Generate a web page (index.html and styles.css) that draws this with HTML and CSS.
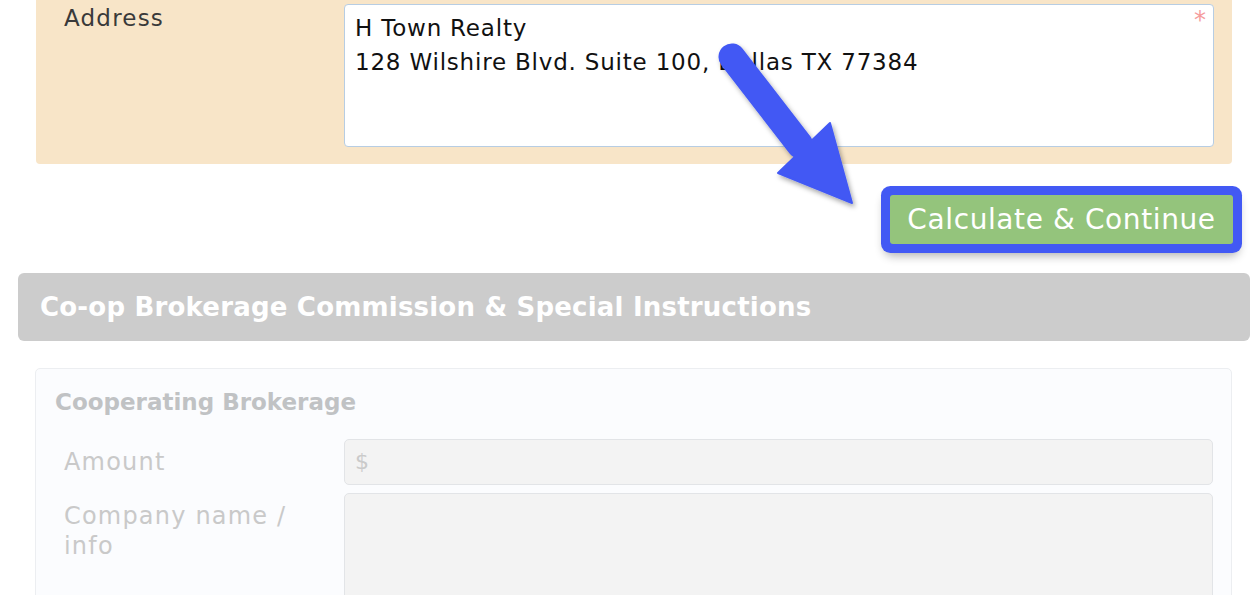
FILE: index.html
```html
<!DOCTYPE html>
<html lang="en">
<head>
  <meta charset="UTF-8" />
  <title>Listing details</title>
  <link rel="stylesheet" href="styles.css">
</head>
<body>
  <div class="page">
    <div class="panel panel-warm">
      <div class="row">
        <label class="label">Address</label>
        <div class="field">
          <div class="textarea">H Town Realty<br>128 Wilshire Blvd. Suite 100, Dallas TX 77384</div>
          <span class="required">*</span>
        </div>
      </div>
    </div>

    <div class="actions">
      <button class="btn-continue">Calculate &amp; Continue</button>
    </div>

    <h2 class="section-title">Co-op Brokerage Commission &amp; Special Instructions</h2>

    <div class="card">
      <h3 class="card-title">Cooperating Brokerage</h3>
      <div class="row row-tight">
        <label class="label muted">Amount</label>
        <div class="input disabled">$</div>
      </div>
      <div class="row row-tight">
        <label class="label muted">Company name /<br>info</label>
        <div class="input disabled tall"></div>
      </div>
    </div>

    <!-- annotation arrow -->
    <svg class="arrow" width="200" height="220" viewBox="0 0 200 220">
      <defs>
        <filter id="sh" x="-20%" y="-20%" width="150%" height="150%">
          <feDropShadow dx="2" dy="3" stdDeviation="2.5" flood-color="#000" flood-opacity="0.35"/>
        </filter>
      </defs>
      <g filter="url(#sh)" fill="#4259f4" stroke="#4259f4">
        <line x1="32" y1="57" x2="100" y2="145" stroke-width="27" stroke-linecap="round"/>
        <polygon points="78,173 130,123 152,203" stroke-width="2" stroke-linejoin="round"/>
      </g>
    </svg>
  </div>
</body>
</html>
```

FILE: styles.css
```css
* {
  box-sizing: border-box;
}

body {
  margin: 0;
  font-family: 'DejaVu Sans', sans-serif;
  background-color: #fff;
  color: #222;
  overflow: hidden;
}

.page {
  position: relative;
  width: 1256px;
  height: 595px;
  overflow: hidden;
}

.panel-warm {
  margin-left: 36px;
  width: 1196px;
  height: 164px;
  padding: 4px 18px 0 28px;
  background-color: #f8e5c8;
  border-radius: 0 0 4px 4px;
}

.row {
  display: flex;
  align-items: flex-start;
}

.label {
  width: 280px;
  flex-shrink: 0;
  font-size: 23px;
  line-height: 28px;
  letter-spacing: 1.2px;
  color: #3a3a3a;
}

.field {
  position: relative;
  flex: 1;
}

.textarea {
  height: 143px;
  padding: 6px 10px;
  background-color: #fff;
  border: 1px solid #b7cde3;
  border-radius: 4px;
  font-size: 23px;
  line-height: 34px;
  letter-spacing: 0.8px;
  color: #111;
}

.required {
  position: absolute;
  top: 2px;
  right: 8px;
  font-size: 24px;
  color: #f59b9b;
}

.actions {
  display: flex;
  justify-content: flex-end;
  height: 273px;
  margin-top: -164px;
  padding: 195px 23px 0 0;
}

.btn-continue {
  width: 343px;
  height: 49px;
  padding: 0;
  border: none;
  border-radius: 3px;
  background-color: #94c47c;
  color: #fff;
  font-family: 'DejaVu Sans', sans-serif;
  font-size: 28px;
  letter-spacing: 0.6px;
  box-shadow: 0 0 0 9px #4259f4, 0 6px 10px 6px rgba(0, 0, 0, 0.3);
}

.section-title {
  margin: 0 0 0 18px;
  width: 1232px;
  height: 68px;
  padding-left: 22px;
  background-color: #cccccc;
  border-radius: 6px;
  color: #fff;
  font-size: 26px;
  font-weight: 700;
  line-height: 68px;
  letter-spacing: 0.2px;
}

.card {
  margin: 27px 0 0 35px;
  width: 1197px;
  height: 240px;
  padding: 16px 18px 0 19px;
  background-color: #fbfcfe;
  border: 1px solid #eceef1;
  border-radius: 5px;
}

.card-title {
  margin: 0 0 20px;
  font-size: 23px;
  font-weight: 700;
  line-height: 34px;
  color: #c0c2c4;
}

.row-tight {
  margin-bottom: 8px;
}

.row-tight .label {
  width: 289px;
  padding-left: 9px;
  padding-top: 8px;
  line-height: 30px;
  font-size: 24px;
  letter-spacing: 1.2px;
}

.muted {
  color: #c9c9c9;
}

.input {
  flex: 1;
  height: 46px;
  padding: 6px 10px;
  border: 1px solid #e2e4e7;
  border-radius: 5px;
  font-size: 22px;
  line-height: 32px;
}

.disabled {
  background-color: #f3f3f3;
  color: #cacaca;
}

.tall {
  height: 140px;
}

.arrow {
  position: absolute;
  left: 700px;
  top: 0;
}
```
